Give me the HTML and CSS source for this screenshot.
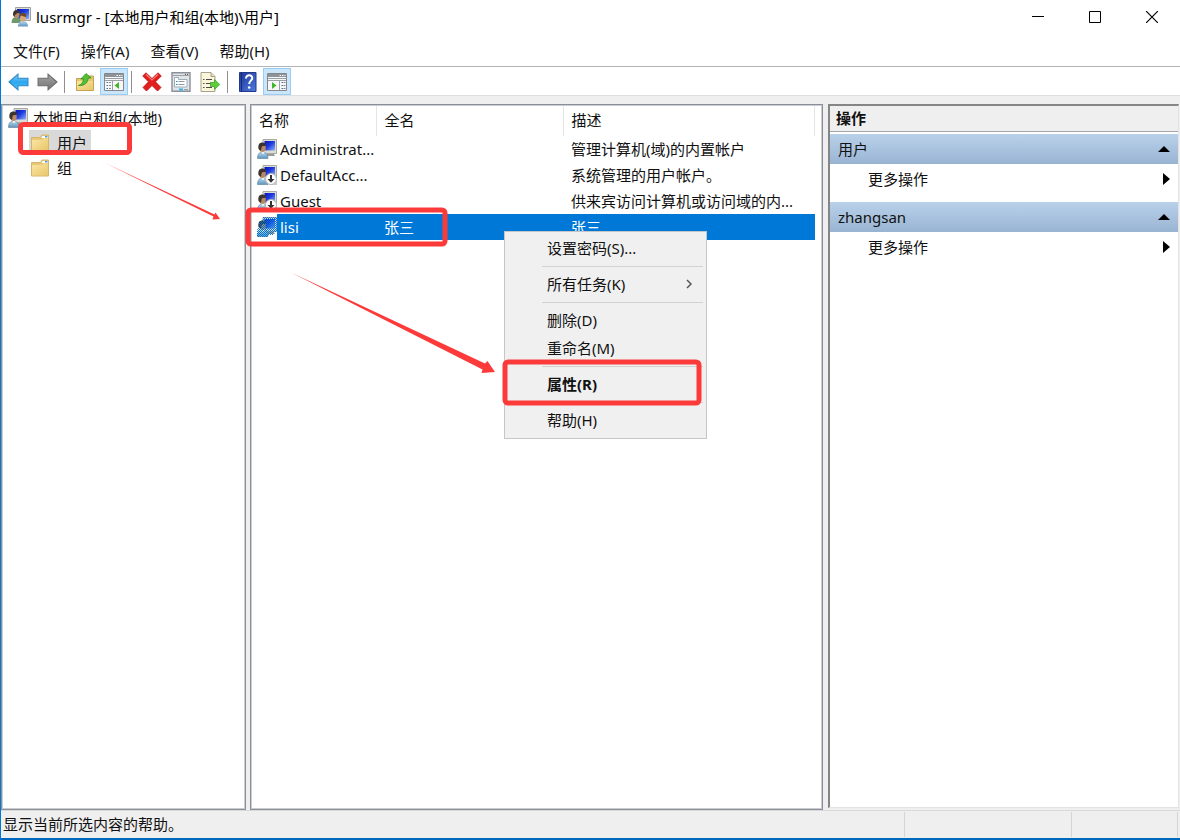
FILE: index.html
```html
<!DOCTYPE html>
<html lang="zh-CN">

<head>
    <meta charset="UTF-8">
    <meta name="viewport" content="width=device-width, initial-scale=1.0">
    <title>lusrmgr - [本地用户和组(本地)\用户]</title>
    <link rel="stylesheet" href="styles.css">
</head>

<body>

    <!-- shared icons -->
    <svg class="sprite" width="0" height="0" aria-hidden="true">
        <defs>
            <linearGradient id="screen" x1="0" y1="0" x2="1" y2="1">
                <stop offset="0" stop-color="#0a14b4" />
                <stop offset=".45" stop-color="#1c3ae0" />
                <stop offset="1" stop-color="#8fb2f6" />
            </linearGradient>
            <linearGradient id="shirt" x1="0" y1="0" x2="0" y2="1">
                <stop offset="0" stop-color="#b9d9ee" />
                <stop offset="1" stop-color="#5f94bd" />
            </linearGradient>
            <linearGradient id="folder-fill" x1="0" y1="0" x2="1" y2="1">
                <stop offset="0" stop-color="#fbe7a3" />
                <stop offset="1" stop-color="#e8c66c" />
            </linearGradient>
            <linearGradient id="blue-arrow" x1="0" y1="0" x2="0" y2="1">
                <stop offset="0" stop-color="#8ad4fb" />
                <stop offset=".5" stop-color="#2ba6ee" />
                <stop offset="1" stop-color="#4fc0f5" />
            </linearGradient>
            <linearGradient id="gray-arrow" x1="0" y1="0" x2="0" y2="1">
                <stop offset="0" stop-color="#a4a4a4" />
                <stop offset="1" stop-color="#747474" />
            </linearGradient>
            <linearGradient id="book" x1="0" y1="0" x2="1" y2="1">
                <stop offset="0" stop-color="#1e3796" />
                <stop offset="1" stop-color="#4f7ae0" />
            </linearGradient>
            <pattern id="dots" width="2" height="2" patternUnits="userSpaceOnUse">
                <path d="M0 0h1v1H0zM1 1h1v1H1z" fill="#0078d7" />
            </pattern>

            <symbol id="user" viewBox="0 0 20 20">
                <path d="M6 .5h13.500v14H6z" fill="#dcdcd6" stroke="#a9a9a2" />
                <path d="M7.500 2h10.500v9.500H7.500z" fill="url(#screen)" />
                <path d="M10 15h7l1 2H9z" fill="#9b9b96" />
                <path d="M.5 19.500c0-4 1.500-6.500 5-6.500s5.500 2.500 5.500 6.500z" fill="url(#shirt)" stroke="#5a7f9c" stroke-width=".6" />
                <path d="M4 12.500l2 3 2-3z" fill="#eef6fb" />
                <ellipse cx="5.500" cy="8.800" rx="3.300" ry="4.200" fill="#b98a62" />
                <path d="M1.500 10C.8 5.500 2.500 3.500 5.500 3.500c2.300 0 3.600 1.200 3.500 3.200-2 .2-3.600.4-4.200 1-.5.800-.2 2.600-1 4.200z" fill="#3c3430" />
            </symbol>
            <symbol id="down-badge" viewBox="0 0 20 20">
                <path d="M12 14h8v6h-8z" fill="#c9c9c4" />
                <circle cx="14" cy="14" r="5.500" fill="#fff" stroke="#b5b5b5" />
                <path d="M13 10h2v4h2.500L14 17.800 10.500 14H13z" fill="#333" />
            </symbol>
            <symbol id="users" viewBox="0 0 20 20">
                <path d="M4.500.5h15v13h-15z" fill="#d9d9d4" stroke="#a2a29c" />
                <path d="M6 2h12v10H6z" fill="url(#screen)" />
                <path d="M.5 16c0-4 1.500-6 4.500-6s5 2 5 6z" fill="#6e9a6c" />
                <ellipse cx="5.500" cy="7.500" rx="3" ry="3.800" fill="#b98a62" />
                <path d="M2 8C1.800 4.500 3.200 3 5.500 3s3.500 1.500 3.300 3C6 6 4 6.500 3.500 10z" fill="#3c3430" />
                <path d="M7 19.500c0-3.500 1.800-5.500 5-5.500s5 2 5 5.500z" fill="url(#shirt)" />
                <ellipse cx="12" cy="10.800" rx="3" ry="3.800" fill="#d5a77c" />
                <path d="M8.800 10c-.2-3 1-4.200 3.200-4.200s3.500 1.300 3.200 4.200c-2-.2-4-1-4.700-1.500z" fill="#6b4a26" />
            </symbol>
            <symbol id="folder" viewBox="0 0 20 18">
                <path d="M1.500 3.500h9l1.500-2.500h6.500v16h-17z" fill="#e7c877" stroke="#d6b468" />
                <path d="M12.500 2h5.500v2h-6.500z" fill="#fff" />
                <path d="M15 2h2.500v1.500H15z" fill="#4c9bd8" />
                <path d="M2 6h10l1.500-1.500H18v12H2z" fill="url(#folder-fill)" />
            </symbol>
            <symbol id="arrow" viewBox="0 0 20 18">
                <path d="M1 9l8.500-7.500V5.500H19v7H9.500v4z" />
            </symbol>
        </defs>
    </svg>

    <div class="window">
        <header class="title-bar">
            <svg class="app-icon"><use href="#users" /></svg>
            <h1>lusrmgr - [本地用户和组(本地)\用户]</h1>
            <button type="button" class="caption" aria-label="最小化">
                <svg width="12" height="12"><path d="M0 5.500h12" stroke="#000" /></svg>
            </button>
            <button type="button" class="caption" aria-label="最大化">
                <svg width="12" height="12"><path d="M.5.5h11v11H.5z" fill="none" stroke="#000" /></svg>
            </button>
            <button type="button" class="caption" aria-label="关闭">
                <svg width="12" height="12"><path d="M0 0l12 12M12 0L0 12" stroke="#000" stroke-width="1.200" /></svg>
            </button>
        </header>

        <nav class="menu-bar">
            <button type="button">文件(F)</button>
            <button type="button">操作(A)</button>
            <button type="button">查看(V)</button>
            <button type="button">帮助(H)</button>
        </nav>

        <div class="toolbar">
            <button type="button" aria-label="后退">
                <svg width="21" height="20" fill="url(#blue-arrow)" stroke="#2a86c8"><use href="#arrow" /></svg>
            </button>
            <button type="button" aria-label="前进">
                <svg class="flip" width="21" height="20" fill="url(#gray-arrow)" stroke="#6c6c6c"><use href="#arrow" /></svg>
            </button>
            <span class="divider"></span>
            <button type="button" aria-label="向上">
                <svg width="20" height="20" viewBox="0 0 20 20">
                    <path d="M1.500 6.500h7l2-2.500h8v14.500h-17z" fill="#e7c877" stroke="#c9a24c" />
                    <path d="M2 9h16v9H2z" fill="url(#folder-fill)" />
                    <path d="M3.500 13.500c3.500-1 4.800-3.500 5-6.500H5.800L11 1.500 16.200 6h-3c-.3 5-3.700 8-9.700 7.500z" fill="#52c234" stroke="#2e8f1c" stroke-width=".8" />
                </svg>
            </button>
            <button type="button" class="pressed" aria-label="显示/隐藏控制台树">
                <svg width="20" height="18" viewBox="0 0 20 18">
                    <path d="M.5.5h19v17H.5z" fill="#f7f7f7" stroke="#83888d" />
                    <path d="M1 1h18v3H1z" fill="#8d9399" />
                    <path d="M12.500 2h1.500v1h-1.500zM15 2h1.500v1H15zM17.500 2h1v1h-1z" fill="#fff" />
                    <path d="M1 5.500h18M1 7.500h18M8.500 7v10" stroke="#9aa0a5" />
                    <path d="M2.500 9.500h1.500M2.500 12.500h1.500M2.500 15.500h1.500" stroke="#3d79b5" />
                    <path d="M5 9.500h2M5 12.500h2M5 15.500h2" stroke="#888" />
                    <path d="M15 9v7l-4.500-3.500z" fill="#42b52c" />
                </svg>
            </button>
            <span class="divider"></span>
            <button type="button" aria-label="删除">
                <svg width="20" height="20" viewBox="0 0 20 20">
                    <path d="M4 .8L10 6.500 16 .8 19.300 4 13.500 9.800 19 15.500 15.500 19 10 13.500 4.500 19 1 15.500 6.500 9.800.7 4z" fill="#e21f1f" stroke="#b51414" stroke-width=".8" />
                    <path d="M4 2.200L10 8l6-5.800" fill="none" stroke="#f47c72" stroke-width="1.200" />
                </svg>
            </button>
            <button type="button" aria-label="属性">
                <svg width="20" height="20" viewBox="0 0 20 20">
                    <path d="M1 .8h18v18.400H1z" fill="#e2e5e8" stroke="#8b9197" stroke-width="1.400" />
                    <path d="M2 3.500h16" stroke="#9aa0a6" />
                    <path d="M14 2h1v1h-1zM16 2h1v1h-1z" fill="#555" />
                    <path d="M3.500 7.500v-2h4v2h8.500V15H3.500z" fill="#fff" stroke="#9daebb" />
                    <path d="M7.500 9.500h6M7.500 12.500h6" stroke="#8d9aa5" />
                    <path d="M5 9.500h1.500M5 12.500h1.500" stroke="#2f80bf" />
                    <path d="M8 16.500h4v2H8z" fill="#35b5ea" />
                    <path d="M13 17.500h4" stroke="#9aa0a6" />
                </svg>
            </button>
            <button type="button" aria-label="导出列表">
                <svg width="20" height="20" viewBox="0 0 20 20">
                    <path d="M1 .5h10L15 4.500v15H1z" fill="#fbf5da" stroke="#a8a28c" />
                    <path d="M11 .5v4h4" fill="#e2dcc0" stroke="#a8a28c" />
                    <path d="M3 7.500h1.500M3 11.500h1.500M3 15.500h1.500M6 7.500h6M6 11.500h5M6 15.500h6" stroke="#4c4c4c" />
                    <path d="M10.500 10.500h4V7.500l5.300 5-5.300 5v-3h-4z" fill="#5bd03a" stroke="#3a9a24" stroke-width=".7" />
                </svg>
            </button>
            <span class="divider"></span>
            <button type="button" aria-label="帮助">
                <svg width="18" height="20" viewBox="0 0 18 20">
                    <path d="M.5.5h16.500v19H.5z" fill="url(#book)" stroke="#23388a" />
                    <path d="M2.500 1v18" stroke="#16287a" />
                    <path d="M7 6.500c0-4.500 6.500-4 6.200-.2-.2 2.400-3 2.500-3 5.700" fill="none" stroke="#fff" stroke-width="2" />
                    <circle cx="10.200" cy="15.500" r="1.300" fill="#fff" />
                </svg>
            </button>
            <button type="button" class="pressed" aria-label="显示/隐藏操作窗格">
                <svg width="20" height="18" viewBox="0 0 20 18">
                    <path d="M.5.5h19v17H.5z" fill="#f7f7f7" stroke="#83888d" />
                    <path d="M1 1h18v3H1z" fill="#8d9399" />
                    <path d="M12.500 2h1.500v1h-1.500zM15 2h1.500v1H15zM17.500 2h1v1h-1z" fill="#fff" />
                    <path d="M1 5.500h18M1 7.500h18M12.500 7v10" stroke="#9aa0a5" />
                    <path d="M14.500 9.500h1.500M14.500 12.500h1.500M14.500 15.500h1.500" stroke="#3d79b5" />
                    <path d="M16.500 9.500h2M16.500 12.500h2M16.500 15.500h2" stroke="#888" />
                    <path d="M5 9v7l4.500-3.500z" fill="#42b52c" />
                </svg>
            </button>
        </div>

        <main class="panes">
            <section class="pane tree">
                <ul>
                    <li><svg class="icon"><use href="#user" /></svg><span>本地用户和组(本地)</span></li>
                    <li class="child selected"><svg class="folder"><use href="#folder" /></svg><span>用户</span></li>
                    <li class="child"><svg class="folder"><use href="#folder" /></svg><span>组</span></li>
                </ul>
            </section>

            <section class="pane list">
                <table>
                    <thead>
                        <tr>
                            <th class="col-name">名称</th>
                            <th class="col-full">全名</th>
                            <th class="col-desc">描述</th>
                        </tr>
                    </thead>
                    <tbody>
                        <tr>
                            <td>
                                <div class="name"><svg class="icon"><use href="#user" /></svg><span>Administrat...</span></div>
                            </td>
                            <td></td>
                            <td>管理计算机(域)的内置帐户</td>
                        </tr>
                        <tr>
                            <td>
                                <div class="name"><svg class="icon"><use href="#user" /><use href="#down-badge" /></svg><span>DefaultAcc...</span></div>
                            </td>
                            <td></td>
                            <td>系统管理的用户帐户。</td>
                        </tr>
                        <tr>
                            <td>
                                <div class="name"><svg class="icon"><use href="#user" /><use href="#down-badge" /></svg><span>Guest</span></div>
                            </td>
                            <td></td>
                            <td>供来宾访问计算机或访问域的内...</td>
                        </tr>
                        <tr class="selected">
                            <td>
                                <div class="name"><svg class="icon"><use href="#user" /><path d="M6 0h14v15h-4v3h-5v2H0v-7l2-3V5l4-2z" fill="url(#dots)" /></svg><span>lisi</span></div>
                            </td>
                            <td>张三</td>
                            <td>张三</td>
                        </tr>
                    </tbody>
                </table>
            </section>

            <aside class="actions">
                <h2>操作</h2>
                <h3>用户 <svg width="12" height="6"><path d="M0 6l6-6 6 6z" /></svg></h3>
                <button type="button">更多操作 <svg width="7" height="12"><path d="M0 0l7 6-7 6z" /></svg></button>
                <h3>zhangsan <svg width="12" height="6"><path d="M0 6l6-6 6 6z" /></svg></h3>
                <button type="button">更多操作 <svg width="7" height="12"><path d="M0 0l7 6-7 6z" /></svg></button>
            </aside>
        </main>

        <footer class="status-bar">
            <span class="message">显示当前所选内容的帮助。</span>
            <span class="cell"></span>
            <span class="cell last"></span>
        </footer>
    </div>

    <div class="context-menu">
        <button type="button">设置密码(S)...</button>
        <hr>
        <button type="button">所有任务(K) <svg width="6" height="10"><path d="M1 1l4 4-4 4" fill="none" stroke="#555" stroke-width="1.500" /></svg></button>
        <hr>
        <button type="button">删除(D)</button>
        <button type="button">重命名(M)</button>
        <hr>
        <button type="button" class="default">属性(R)</button>
        <hr>
        <button type="button">帮助(H)</button>
    </div>

    <!-- red boxes and arrows over the window -->
    <svg class="marks" width="1180" height="840" aria-hidden="true">
        <g fill="none" stroke="#fd3a3a" stroke-width="5">
            <rect x="20.500" y="124.500" width="109" height="28" rx="3" />
            <rect x="248" y="210" width="197" height="34" rx="3" />
            <rect x="505" y="362" width="194" height="41" rx="3" />
        </g>
        <g fill="#fd3a3a">
            <path d="M104 162.500L213.500 216.500 212.500 219.500 220 219 215.500 212.500 214.500 214.500z" />
            <path d="M291 272.500L482.500 369.500 481.500 373 495 372 487.500 361 485 363.500z" />
        </g>
    </svg>

</body>

</html>
```
FILE: styles.css
```css
* {
    box-sizing: border-box;
}

body {
    margin: 0;
    font-family: "Noto Sans", "Noto Sans CJK SC", sans-serif;
    font-size: 15px;
    line-height: 24px;
    color: #111;
    background-color: #fff;
}

h1,
h2,
h3,
ul {
    margin: 0;
    padding: 0;
    font-size: 15px;
    font-weight: normal;
}

button {
    margin: 0;
    padding: 0;
    border: 0;
    background: none;
    font: inherit;
    color: inherit;
    text-align: left;
}

svg {
    display: block;
    flex: none;
}

.sprite {
    position: absolute;
}

.window {
    display: flex;
    flex-direction: column;
    height: 100vh;
    border-left: 1px solid #0078d7;
    border-bottom: 2px solid #0067be;
    background-color: #efefef;
}

/* title, menu and tool bars */
.title-bar {
    display: flex;
    align-items: center;
    height: 34px;
    padding-left: 10px;
    background-color: #fff;
}

.title-bar h1 {
    flex: 1;
    margin-left: 5px;
    color: #000;
}

.app-icon,
.icon {
    width: 20px;
    height: 20px;
}

.caption {
    display: flex;
    align-items: center;
    justify-content: center;
    width: 57px;
    height: 34px;
}

.menu-bar {
    display: flex;
    gap: 21px;
    height: 33px;
    padding: 5px 12px 0;
    border-bottom: 1px solid #b4b4b6;
    background-color: #fff;
}

.menu-bar button {
    height: 24px;
}

.toolbar {
    display: flex;
    align-items: center;
    gap: 1px;
    height: 29px;
    padding: 1px 3px 0;
    border-bottom: 1px solid #dedede;
    background-color: #fff;
}

.toolbar button {
    display: flex;
    align-items: center;
    justify-content: center;
    width: 28px;
    height: 27px;
}

.toolbar .pressed {
    border: 1px solid #98cdf5;
    background-color: #cbe6fb;
}

.divider {
    width: 1px;
    height: 22px;
    margin: 0 5px 0 2px;
    background-color: #8f8f8f;
}

.flip {
    transform: scaleX(-1);
}

/* panes */
.panes {
    display: flex;
    flex: 1;
    gap: 4px;
    padding: 8px 1px 0 0;
}

.pane {
    border: 1px solid #8b9098;
    outline: 1px solid #c9ccd0;
    outline-offset: -2px;
    background-color: #fff;
}

.tree {
    width: 245px;
}

.tree ul {
    list-style: none;
}

.tree li {
    display: flex;
    align-items: center;
    gap: 5px;
    height: 25px;
    padding-left: 6px;
}

.tree .child {
    width: max-content;
    margin-left: 27px;
    padding: 0 4px 0 1px;
    gap: 7px;
}

.tree .selected {
    background-color: #d9d9d9;
}

.folder {
    width: 20px;
    height: 18px;
}

.list {
    flex: 1;
    padding: 1px 7px 0 0;
}

.list table {
    width: 100%;
    border-collapse: collapse;
    table-layout: fixed;
}

.list th {
    height: 30px;
    padding: 0 8px 2px;
    border-right: 1px solid #e5e5e5;
    font-weight: normal;
    text-align: left;
}

.list td {
    height: 26px;
    padding: 0 8px;
    line-height: 26px;
    white-space: nowrap;
}

.list td:first-child {
    padding: 0;
}

.col-name {
    width: 125px;
}

.col-full {
    width: 187px;
}

.name {
    display: flex;
    align-items: center;
    padding-left: 6px;
}

.name span {
    flex: 1;
    padding-left: 3px;
}

.list .selected {
    color: #fff;
}

.list .selected .name span,
.list .selected td:not(:first-child) {
    background-color: #0078d7;
}

.actions {
    width: 351px;
    margin: 0 0 2px 1px;
    border: 2px solid #858585;
    border-right: 1px solid #e3e3e3;
    border-bottom: 1px solid #e3e3e3;
    background-color: #fff;
}

.actions h2 {
    height: 26px;
    margin-bottom: 2px;
    padding-left: 6px;
    border-bottom: 1px solid #a5a5a5;
    background-color: #efefef;
    font-weight: bold;
    line-height: 25px;
}

.actions h3,
.actions button {
    display: flex;
    align-items: center;
    justify-content: space-between;
    width: 100%;
    height: 30px;
    padding: 0 8px;
}

.actions h3 {
    background: linear-gradient(#b9d1ea, #99b4d3);
}

.actions button {
    margin-bottom: 8px;
    padding-left: 38px;
}

.status-bar {
    display: flex;
    height: 28px;
    padding-right: 2px;
    border-top: 1px solid #d9d9d9;
}

.message {
    flex: 1;
    padding: 1px 2px 0;
}

.cell {
    width: 167px;
    margin: 1px 0;
    border-left: 1px solid #d5d5d5;
}

.last {
    width: 107px;
    border-right: 1px solid #d5d5d5;
}

/* right-click menu of the selected user */
.context-menu {
    position: absolute;
    left: 504px;
    top: 231px;
    width: 203px;
    padding: 2px 2px 4px;
    border: 1px solid #c6c6c6;
    background-color: #f0f0f0;
}

.context-menu button {
    display: flex;
    align-items: center;
    justify-content: space-between;
    width: 100%;
    height: 28px;
    padding: 0 12px 0 40px;
}

.context-menu hr {
    height: 1px;
    margin: 4px 1px 3px 35px;
    border: 0;
    background-color: #d2d2d2;
}

.context-menu .default {
    font-weight: bold;
}

.marks {
    position: absolute;
    left: 0;
    top: 0;
    pointer-events: none;
}
```
